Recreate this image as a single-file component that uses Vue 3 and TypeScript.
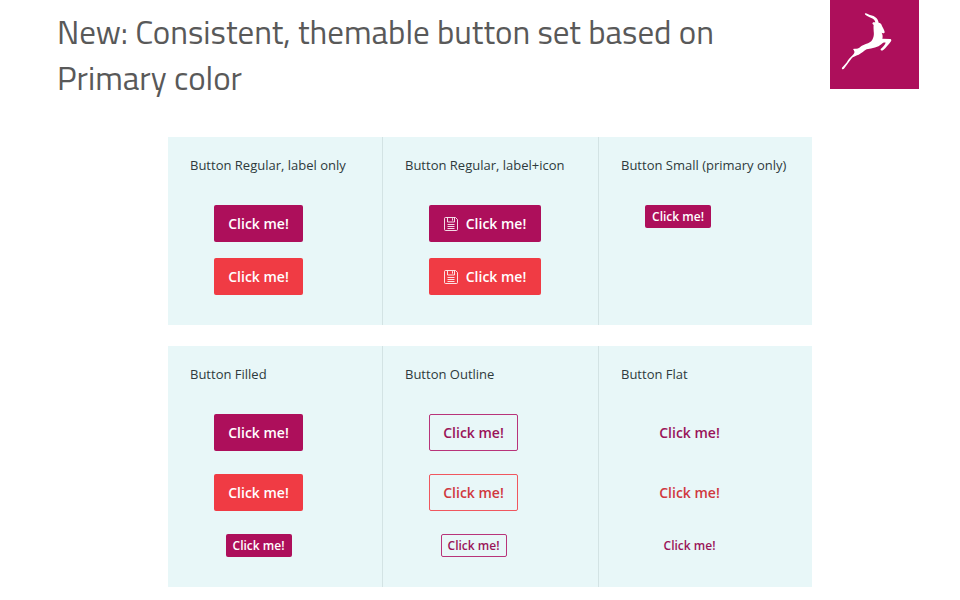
<script setup lang="ts">
interface DemoButton {
  tone: 'primary' | 'danger'
  variant: 'filled' | 'outline' | 'flat'
  small?: boolean
  icon?: boolean
}

interface Column {
  title: string
  buttons: DemoButton[]
}

interface Panel {
  name: string
  columns: Column[]
}

const variantSet = (variant: DemoButton['variant']): DemoButton[] => [
  { tone: 'primary', variant },
  { tone: 'danger', variant },
  { tone: 'primary', variant, small: true },
]

const panels: Panel[] = [
  {
    name: 'sizes',
    columns: [
      {
        title: 'Button Regular, label only',
        buttons: [
          { tone: 'primary', variant: 'filled' },
          { tone: 'danger', variant: 'filled' },
        ],
      },
      {
        title: 'Button Regular, label+icon',
        buttons: [
          { tone: 'primary', variant: 'filled', icon: true },
          { tone: 'danger', variant: 'filled', icon: true },
        ],
      },
      {
        title: 'Button Small (primary only)',
        buttons: [{ tone: 'primary', variant: 'filled', small: true }],
      },
    ],
  },
  {
    name: 'variants',
    columns: [
      { title: 'Button Filled', buttons: variantSet('filled') },
      { title: 'Button Outline', buttons: variantSet('outline') },
      { title: 'Button Flat', buttons: variantSet('flat') },
    ],
  },
]
</script>

<template>
  <main class="slide">
    <header class="head">
      <h1 class="title">New: Consistent, themable button set based on Primary color</h1>
      <svg class="logo" viewBox="0 0 267 267" aria-hidden="true">
        <rect width="267" height="267" fill="#ad0f5b" />
        <path
          transform="translate(24 24)"
          fill="#fff"
          d="M82 16 C88 16 91 20 96 21 C104 22 110 26 115 30 C119 34 121 39 122 44 C127 44 131 48 132 54 C135 60 139 66 140 72 C140 76 136 77 133 75 L131 74 C134 80 135 86 133 92 L157 93 C160 94 161 97 159 100 C153 109 144 119 135 127 C131 129 127 127 128 123 C135 117 140 111 143 104 C138 103 134 104 130 109 C120 118 104 121 86 124 C77 128 72 136 62 140 C53 144 45 145 40 152 C34 161 25 171 19 181 C16 186 10 184 12 179 C18 173 25 166 30 157 C35 149 42 144 47 138 C51 133 50 130 45 123 C52 121 58 123 64 119 C72 112 81 109 90 106 C98 103 103 98 105 91 C108 84 108 77 107 69 C107 62 106 56 107 51 L103 47 L105 43 L112 43 C111 37 107 33 100 30 C93 27 87 24 83 21 C80 19 80 17 82 16 Z"
        />
      </svg>
    </header>

    <div class="panels">
      <section v-for="panel in panels" :key="panel.name" class="panel">
        <div v-for="column in panel.columns" :key="column.title" class="column">
          <h2 class="label">{{ column.title }}</h2>
          <div class="stack" :class="panel.name">
            <button
              v-for="(button, index) in column.buttons"
              :key="index"
              type="button"
              class="btn"
              :class="[button.tone, button.variant, { small: button.small, 'with-icon': button.icon }]"
            >
              <svg v-if="button.icon" class="icon" viewBox="0 0 14 14" aria-hidden="true">
                <path d="M1.5 .5 H11.5 L13.5 2.5 V12.5 Q13.5 13.5 12.5 13.5 H1.5 Q.5 13.5 .5 12.5 V1.5 Q.5 .5 1.5 .5 Z" />
                <path d="M3.5 .8 V5 H10.5 V.8 M8.5 1.2 V3.6" />
                <path d="M3.5 7.5 H10.5 M3.5 9.5 H10.5 M3.5 11.5 H10.5" />
              </svg>
              Click me!
            </button>
          </div>
        </div>
      </section>
    </div>
  </main>
</template>

<style>
body {
  margin: 0;
  background: #fff;
}
</style>

<style scoped>
.slide {
  font-family: 'Open Sans', 'Noto Sans', sans-serif;
  color: #2e3a3c;
}

.head {
  display: flex;
  align-items: flex-start;
  justify-content: space-between;
  gap: 24px;
  padding: 0 41px 0 57px;
}

.title {
  flex: 1;
  max-width: 700px;
  margin: 0;
  padding: 9px 0 36px;
  font-family: 'Titillium Web', Roboto, 'Open Sans', sans-serif;
  font-size: 33px;
  font-weight: 400;
  line-height: 46px;
  color: #595959;
}

.logo {
  flex: none;
  width: 89px;
  height: 89px;
}

.panels {
  display: flex;
  flex-direction: column;
  gap: 21px;
  padding: 0 148px 13px 168px;
}

.panel {
  display: grid;
  grid-template-columns: 214fr 216fr 214fr;
  background: #e8f7f8;
}

.column {
  padding: 18px 0 30px 22px;
}

.column + .column {
  border-left: 1px solid #d3e3e4;
}

.label {
  margin: 0 0 30px;
  font-size: 13px;
  font-weight: 400;
  line-height: 20px;
  white-space: nowrap;
}

.stack {
  display: inline-flex;
  flex-direction: column;
  align-items: center;
  gap: 16px;
  margin-left: 24px;
  vertical-align: top;
}

.stack.variants {
  gap: 23px;
}

.btn {
  display: inline-flex;
  align-items: center;
  justify-content: center;
  gap: 8px;
  min-width: 89px;
  height: 37px;
  padding: 0 13px;
  border: 1px solid transparent;
  border-radius: 2px;
  background: transparent;
  font-family: inherit;
  font-size: 14px;
  font-weight: 600;
  line-height: 20px;
  white-space: nowrap;
  cursor: pointer;
}

.btn.with-icon {
  min-width: 112px;
}

.btn.small {
  min-width: 66px;
  height: 23px;
  padding: 0 6px;
  font-size: 12px;
  line-height: 16px;
}

.btn.primary {
  color: #9a1458;
}

.btn.danger {
  color: #d0383f;
}

.btn.filled {
  color: #fff;
}

.filled.primary {
  background: #ad0f5b;
}

.filled.danger {
  background: #f03b44;
}

.outline.primary {
  border-color: #b8347a;
}

.outline.danger {
  border-color: #f0575f;
}

.icon {
  width: 14px;
  height: 14px;
  fill: none;
  stroke: #fff;
  stroke-width: 1;
  stroke-opacity: 0.85;
}
</style>
